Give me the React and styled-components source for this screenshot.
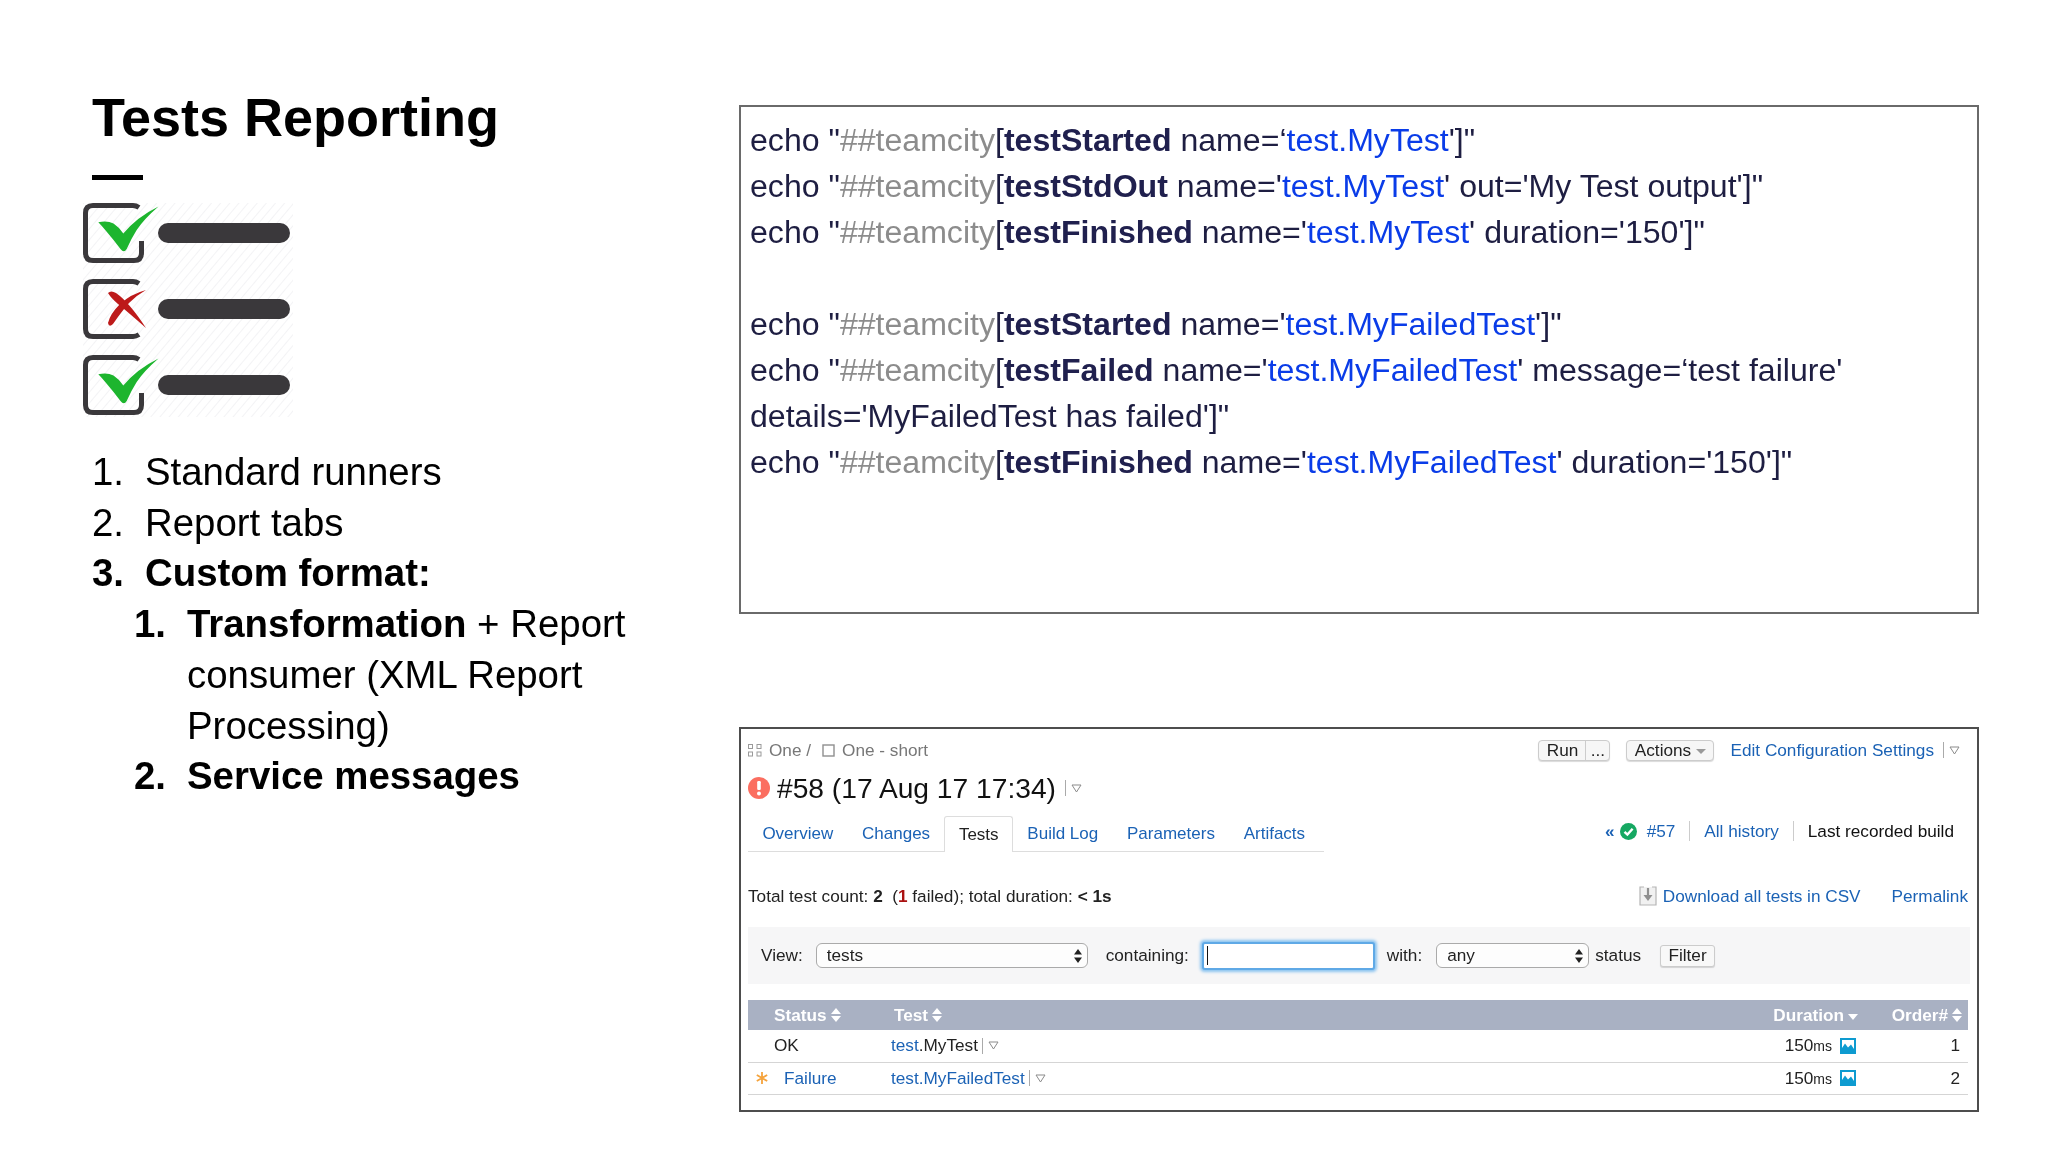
import React from "react";
import styled, { createGlobalStyle } from "styled-components";

const GlobalStyle = createGlobalStyle`
  html, body {
    margin: 0;
    padding: 0;
    background: #fff;
  }
  * {
    box-sizing: border-box;
  }
`;

const linkColor = "#1b62b5";

//* Small drawings
const Tick = () => (
  <path
    d="M15.3 19.3 Q24 17 30.5 20.5 Q36 24 40.3 30.5 Q54 14 75.5 3.5 Q61 16 53.7 27 Q48 36 43.7 46 Q41 50.5 37.5 46 Q30 36 23.7 28.7 Q19 23 15.3 19.3Z"
    fill="#1db52e"
  />
);

const Cross = () => (
  <g fill="#bd1a1a">
    <path d="M25 14 Q28 11 33 14 Q46 23 63 49 Q46 34 35 25 Q28 19 25 14Z" />
    <path d="M63 11 Q48 15 37 25 Q27 35 25 44 Q26 49 30 45 Q39 32 46 24 Q54 16 63 11Z" />
  </g>
);

const ChecklistRow = ({ y, failed }) => (
  <g transform={`translate(0 ${y})`}>
    <path
      d={
        failed
          ? "M56 4.5 Q53 2.5 50 2.5 H10 Q2.5 2.5 2.5 10 V50 Q2.5 57.5 10 57.5 H50 Q53 57.5 56 55.5"
          : "M56 4.5 Q53 2.5 50 2.5 H10 Q2.5 2.5 2.5 10 V50 Q2.5 57.5 10 57.5 H51 Q58.5 57.5 58.5 50 V38"
      }
      fill="none"
      stroke="#3a383b"
      strokeWidth="5"
    />
    {failed ? <Cross /> : <Tick />}
    <rect x="75" y="20" width="132" height="20" rx="10" fill="#3a383b" />
  </g>
);

const ChecklistIcon = () => (
  <ChecklistSvg viewBox="0 0 210 214" width="210" height="214">
    <defs>
      <pattern id="hatch" width="7" height="7" patternUnits="userSpaceOnUse" patternTransform="rotate(40)">
        <line x1="0" y1="0" x2="0" y2="7" stroke="#f3f3f5" strokeWidth="2" />
      </pattern>
    </defs>
    <rect x="0" y="0" width="210" height="214" fill="url(#hatch)" />
    <ChecklistRow y={0} />
    <ChecklistRow y={76} failed />
    <ChecklistRow y={152} />
  </ChecklistSvg>
);

const MenuTriangle = () => (
  <svg width="11" height="9" viewBox="0 0 11 9">
    <path d="M1 1 H10 L5.5 8Z" fill="none" stroke="#8b8b8b" strokeWidth="1" />
  </svg>
);

const UpDown = ({ color = "#fff" }) => (
  <svg width="10" height="14" viewBox="0 0 10 14">
    <path d="M5 0 L10 6 H0Z M5 14 L0 8 H10Z" fill={color} />
  </svg>
);

const ProjectIcon = () => (
  <svg width="14" height="14" viewBox="0 0 14 14" fill="none" stroke="#9a9a9a" strokeWidth="1">
    <rect x="0.5" y="1.5" width="4" height="4" />
    <rect x="9" y="1.5" width="4" height="4" />
    <rect x="0.5" y="9" width="4" height="4" />
    <rect x="9" y="9" width="4" height="4" />
  </svg>
);

const ConfigIcon = () => (
  <svg width="13" height="13" viewBox="0 0 13 13">
    <rect x="1" y="1" width="11" height="11" fill="none" stroke="#8f8f8f" strokeWidth="1.4" />
  </svg>
);

const ErrorIcon = () => (
  <svg width="22" height="22" viewBox="0 0 22 22">
    <circle cx="11" cy="11" r="11" fill="#fb6e60" />
    <rect x="9.2" y="4" width="3.6" height="9" rx="1.2" fill="#fff" />
    <circle cx="11" cy="16.4" r="2" fill="#fff" />
  </svg>
);

const OkIcon = () => (
  <svg width="17" height="17" viewBox="0 0 17 17">
    <circle cx="8.5" cy="8.5" r="8.5" fill="#16a862" />
    <path d="M4.5 8.8 L7.4 11.6 L12.6 5.8" fill="none" stroke="#fff" strokeWidth="2.4" />
  </svg>
);

const DownloadIcon = () => (
  <svg width="18" height="20" viewBox="0 0 18 20">
    <path d="M5 1 H1 V19 H17 V1 H13" fill="#f1f1f1" stroke="#b5b5b5" strokeWidth="1.2" />
    <path d="M9 2 V10" stroke="#8f8f8f" strokeWidth="2.2" />
    <path d="M4.5 9 H13.5 L9 15Z" fill="#8f8f8f" />
  </svg>
);

const ChartIcon = () => (
  <svg width="16" height="16" viewBox="0 0 16 16">
    <rect width="16" height="16" fill="#0e9bd0" />
    <path d="M2 2 H14 V11 L11 6.5 L8 9.5 L5 5.5 L2 10Z" fill="#fff" />
  </svg>
);

const StarIcon = () => (
  <svg width="14" height="14" viewBox="0 0 14 14" stroke="#f5a33c" strokeWidth="1.8">
    <path d="M7 1 V13 M1.8 4 L12.2 10 M12.2 4 L1.8 10" />
  </svg>
);

const SelectArrows = () => (
  <svg width="8" height="14" viewBox="0 0 8 14">
    <path d="M4 0 L8 5.6 H0Z M4 14 L0 8.4 H8Z" fill="#222" />
  </svg>
);

const codeLines = [
  [["testStarted"], " name=‘", "test.MyTest", "']\""],
  [["testStdOut"], " name='", "test.MyTest", "' out='My Test output']\""],
  [["testFinished"], " name='", "test.MyTest", "' duration='150']\""],
  null,
  [["testStarted"], " name='", "test.MyFailedTest", "']\""],
  [["testFailed"], " name='", "test.MyFailedTest", "' message=‘test failure'"],
  "details='MyFailedTest has failed']\"",
  [["testFinished"], " name='", "test.MyFailedTest", "' duration='150']\""],
];

const tabs = ["Overview", "Changes", "Tests", "Build Log", "Parameters", "Artifacts"];

function CodeLineRow({ line }) {
  if (line === null) return <CodeLine>&nbsp;</CodeLine>;
  if (typeof line === "string") return <CodeLine>{line}</CodeLine>;
  const [[message], before, name, after] = line;
  return (
    <CodeLine>
      echo "<CodeGray>##teamcity</CodeGray>[<strong>{message}</strong>
      {before}
      <CodeBlue>{name}</CodeBlue>
      {after}
    </CodeLine>
  );
}

function App() {
  return (
    <Slide>
      <GlobalStyle />
      <LeftColumn>
        <Title>Tests Reporting</Title>
        <Rule />
        <ChecklistIcon />
        <List>
          <Item>
            <Num>1.</Num>
            <span>Standard runners</span>
          </Item>
          <Item>
            <Num>2.</Num>
            <span>Report tabs</span>
          </Item>
          <Item $bold>
            <Num>3.</Num>
            <span>Custom format:</span>
          </Item>
          <Item $nested>
            <Num $bold>1.</Num>
            <span>
              <b>Transformation</b> + Report consumer (XML Report Processing)
            </span>
          </Item>
          <Item $nested $bold>
            <Num>2.</Num>
            <span>Service messages</span>
          </Item>
        </List>
      </LeftColumn>

      <RightColumn>
        <CodeBox>
          {codeLines.map((line, i) => (
            <CodeLineRow key={i} line={line} />
          ))}
        </CodeBox>

        <BuildWindow>
          <TopRow>
            <Crumbs>
              <ProjectIcon />
              <span>One /</span>
              <ConfigIcon />
              <span>One - short</span>
            </Crumbs>
            <TopActions>
              <ButtonGroup>
                <GroupPart $width={46}>Run</GroupPart>
                <GroupPart $width={24} $divided>
                  ...
                </GroupPart>
              </ButtonGroup>
              <ActionsButton>
                Actions <Caret />
              </ActionsButton>
              <A>Edit Configuration Settings</A>
              <MenuHandle $space={9}>
                <MenuTriangle />
              </MenuHandle>
            </TopActions>
          </TopRow>

          <BuildTitle>
            <ErrorIcon />
            <h1>#58 (17 Aug 17 17:34)</h1>
            <MenuHandle $space={2}>
              <MenuTriangle />
            </MenuHandle>
          </BuildTitle>

          <TabRow>
            <Tabs>
              {tabs.map((t) => (
                <Tab key={t} $active={t === "Tests"}>
                  {t}
                </Tab>
              ))}
            </Tabs>
            <History>
              <A $bold>«</A>
              <OkIcon />
              <A $space={5}>#57</A>
              <HistorySep />
              <A>All history</A>
              <HistorySep />
              <span>Last recorded build</span>
            </History>
          </TabRow>

          <SummaryRow>
            <span>
              Total test count: <b>2</b>&nbsp; (<FailedCount>1</FailedCount> failed); total duration: <b>&lt; 1s</b>
            </span>
            <SummaryLinks>
              <DownloadIcon />
              <A>Download all tests in CSV</A>
              <A $space={25}>Permalink</A>
            </SummaryLinks>
          </SummaryRow>

          <FilterBar>
            <span>View:</span>
            <SelectBox $width={272} $space={13}>
              tests <SelectArrows />
            </SelectBox>
            <FilterLabel $space={18}>containing:</FilterLabel>
            <SearchBox>
              <TextCaret />
            </SearchBox>
            <FilterLabel $space={12}>with:</FilterLabel>
            <SelectBox $width={153} $space={14}>
              any <SelectArrows />
            </SelectBox>
            <FilterLabel $space={6}>status</FilterLabel>
            <FilterButton>Filter</FilterButton>
          </FilterBar>

          <TestTable>
            <HeadRow>
              <HeadCell $pad={26}>
                Status <UpDown />
              </HeadCell>
              <HeadCell $pad={3}>
                Test <UpDown />
              </HeadCell>
              <HeadCell $end>
                Duration <SortDown />
              </HeadCell>
              <HeadCell $end $padRight={6}>
                Order# <UpDown />
              </HeadCell>
            </HeadRow>
            <BodyRow>
              <StatusCell $pad={26}>OK</StatusCell>
              <TestCell>
                <A>test</A>.MyTest
                <MenuHandle $space={4}>
                  <MenuTriangle />
                </MenuHandle>
              </TestCell>
              <DurationCell>
                <span>
                  150<small>ms</small>
                </span>
                <ChartIcon />
              </DurationCell>
              <OrderCell>1</OrderCell>
            </BodyRow>
            <BodyRow>
              <StatusCell $pad={7}>
                <StarIcon />
                <A $space={15}>Failure</A>
              </StatusCell>
              <TestCell>
                <A>test.MyFailedTest</A>
                <MenuHandle $space={4}>
                  <MenuTriangle />
                </MenuHandle>
              </TestCell>
              <DurationCell>
                <span>
                  150<small>ms</small>
                </span>
                <ChartIcon />
              </DurationCell>
              <OrderCell>2</OrderCell>
            </BodyRow>
          </TestTable>
        </BuildWindow>
      </RightColumn>
    </Slide>
  );
}

export default App;

const Slide = styled.div`
  display: flex;
  width: 2048px;
  height: 1152px;
  overflow: hidden;
  background: #fff;
  color: #000;
  font-family: "Liberation Sans", Arial, sans-serif;
  filter: blur(0.35px);
`;

const LeftColumn = styled.div`
  flex: 0 0 739px;
  padding: 87px 0 0 92px;
`;

const Title = styled.h1`
  margin: 0;
  font-size: 54px;
  line-height: 60px;
  font-weight: 700;
`;

const Rule = styled.div`
  width: 51px;
  height: 5px;
  margin-top: 28px;
  background: #000;
`;

const ChecklistSvg = styled.svg`
  display: block;
  margin: 23px 0 0 -9px;
  overflow: visible;
`;

const List = styled.div`
  margin-top: 30px;
  width: 560px;
  font-size: 38.4px;
  line-height: 50.7px;
`;

const Item = styled.div`
  display: flex;
  margin-left: ${(p) => (p.$nested ? "42px" : "0")};
  font-weight: ${(p) => (p.$bold ? 700 : 400)};
`;

const Num = styled.span`
  flex: 0 0 53px;
  font-weight: ${(p) => (p.$bold ? 700 : "inherit")};
`;

const RightColumn = styled.div`
  flex: 0 0 1240px;
  padding-top: 105px;
`;

const CodeBox = styled.div`
  height: 509px;
  padding: 10px 0 0 9px;
  border: 2px solid #6a6a6a;
  color: #1e1e42;
  font-size: 32.1px;
  line-height: 46px;

  strong {
    color: #20204e;
  }
`;

const CodeLine = styled.div`
  white-space: nowrap;
`;

const CodeGray = styled.span`
  color: #8c8c8c;
`;

const CodeBlue = styled.span`
  color: #0a3ce8;
`;

const BuildWindow = styled.div`
  height: 385px;
  margin-top: 113px;
  padding: 9px 9px 0 7px;
  border: 2px solid #4d4d4d;
  color: #222;
  font-size: 17.2px;
`;

const A = styled.span`
  margin-left: ${(p) => p.$space || 0}px;
  color: ${linkColor};
  font-weight: ${(p) => (p.$bold ? 700 : "inherit")};
`;

const TopRow = styled.div`
  display: flex;
  align-items: center;
  justify-content: space-between;
  height: 24px;
`;

const Crumbs = styled.div`
  display: flex;
  align-items: center;
  gap: 7px;
  color: #777;

  span + svg {
    margin-left: 4px;
  }
`;

const TopActions = styled.div`
  display: flex;
  align-items: center;
  padding-right: 8px;
`;

const ButtonGroup = styled.div`
  display: flex;
  height: 21px;
  border: 1px solid #ccc;
  border-radius: 4px;
  background: #f6f6f6;
  box-shadow: 0 1px 1px rgba(0, 0, 0, 0.15);
`;

const GroupPart = styled.div`
  display: flex;
  align-items: center;
  justify-content: center;
  width: ${(p) => p.$width}px;
  border-left: ${(p) => (p.$divided ? "1px solid #ccc" : "none")};
`;

const ActionsButton = styled.div`
  display: flex;
  align-items: center;
  justify-content: center;
  gap: 5px;
  width: 88px;
  height: 21px;
  margin: 0 16px 0 16px;
  border: 1px solid #ccc;
  border-radius: 4px;
  background: #f6f6f6;
  box-shadow: 0 1px 1px rgba(0, 0, 0, 0.15);
`;

const Caret = styled.i`
  width: 0;
  height: 0;
  margin-top: 2px;
  border-left: 5px solid transparent;
  border-right: 5px solid transparent;
  border-top: 5px solid #999;
`;

const MenuHandle = styled.span`
  display: inline-flex;
  align-items: center;
  gap: 5px;
  margin-left: ${(p) => p.$space}px;
  vertical-align: middle;

  &::before {
    content: "";
    width: 1px;
    height: 16px;
    background: #aaa;
  }
`;

const BuildTitle = styled.div`
  display: flex;
  align-items: center;
  gap: 7px;
  height: 32px;
  margin-top: 10px;
  color: #111;

  h1 {
    margin: 0;
    font-size: 28.2px;
    font-weight: 400;
  }
`;

const TabRow = styled.div`
  display: flex;
  justify-content: space-between;
  align-items: center;
  height: 36px;
  margin-top: 12px;
`;

const Tabs = styled.div`
  display: flex;
  width: 576px;
  height: 36px;
  border-bottom: 1px solid #ddd;
`;

const Tab = styled.div`
  display: flex;
  align-items: center;
  flex: none;
  padding: 0 13.4px;
  height: ${(p) => (p.$active ? "36px" : "35px")};
  font-size: 17px;
  color: ${(p) => (p.$active ? "#222" : linkColor)};
  background: #fff;
  white-space: nowrap;
  border: 1px solid ${(p) => (p.$active ? "#ddd" : "transparent")};
  border-bottom: none;
  border-radius: 3px 3px 0 0;
`;

const History = styled.div`
  display: flex;
  align-items: center;
  gap: 5px;
  padding: 0 14px 6px 0;
  color: #111;
`;

const HistorySep = styled.i`
  width: 1px;
  height: 20px;
  margin: 0 9px;
  background: #ccc;
`;

const SummaryRow = styled.div`
  display: flex;
  align-items: center;
  justify-content: space-between;
  height: 24px;
  margin-top: 32px;
`;

const SummaryLinks = styled.div`
  display: flex;
  align-items: center;
  gap: 6px;
`;

const FailedCount = styled.b`
  color: #a11;
`;

const FilterBar = styled.div`
  display: flex;
  align-items: center;
  height: 57px;
  margin: 19px -2px 0 0;
  padding-left: 13px;
  background: #f6f6f7;
`;

const FilterLabel = styled.span`
  margin-left: ${(p) => p.$space}px;
`;

const SelectBox = styled.div`
  display: flex;
  align-items: center;
  justify-content: space-between;
  width: ${(p) => p.$width}px;
  height: 25px;
  margin-left: ${(p) => p.$space}px;
  padding: 0 5px 0 10px;
  border: 1px solid #aaa;
  border-radius: 6px;
  background: #fdfdfd;
`;

const SearchBox = styled.div`
  display: flex;
  align-items: center;
  width: 173px;
  height: 28px;
  margin-left: 13px;
  padding-left: 3px;
  border: 2px solid #5fa9e6;
  border-radius: 3px;
  background: #fff;
  box-shadow: 0 0 3px 1.5px #8cc4f0;
`;

const TextCaret = styled.i`
  width: 1px;
  height: 19px;
  background: #111;
`;

const FilterButton = styled.div`
  display: flex;
  align-items: center;
  justify-content: center;
  width: 55px;
  height: 22px;
  margin-left: 19px;
  border: 1px solid #ccc;
  border-radius: 3px;
  background: #f8f8f8;
  box-shadow: 0 1px 1px rgba(0, 0, 0, 0.15);
`;

const TestTable = styled.div`
  margin-top: 16px;
`;

const HeadRow = styled.div`
  display: grid;
  grid-template-columns: 143px 1fr 100px 108px;
  align-items: center;
  height: 30px;
  background: #a9b1c3;
  color: #fff;
  font-weight: 700;
`;

const HeadCell = styled.div`
  display: flex;
  align-items: center;
  justify-content: ${(p) => (p.$end ? "flex-end" : "flex-start")};
  gap: 4px;
  padding-left: ${(p) => p.$pad || 0}px;
  padding-right: ${(p) => p.$padRight || 0}px;
`;

const SortDown = styled.i`
  width: 0;
  height: 0;
  margin: 4px 2px 0 0;
  border-left: 5px solid transparent;
  border-right: 5px solid transparent;
  border-top: 6px solid #fff;
`;

const BodyRow = styled.div`
  display: grid;
  grid-template-columns: 143px 1fr 100px 108px;
  align-items: center;
  height: 32.5px;
  border-bottom: 1px solid #d5d5d5;
`;

const StatusCell = styled.div`
  display: flex;
  align-items: center;
  padding-left: ${(p) => p.$pad}px;
`;

const TestCell = styled.div`
  display: flex;
  align-items: center;
`;

const DurationCell = styled.div`
  display: flex;
  align-items: center;
  justify-content: flex-end;
  gap: 8px;
  padding-right: 4px;

  small {
    font-size: 14px;
  }
`;

const OrderCell = styled.div`
  padding-right: 8px;
  text-align: right;
`;
